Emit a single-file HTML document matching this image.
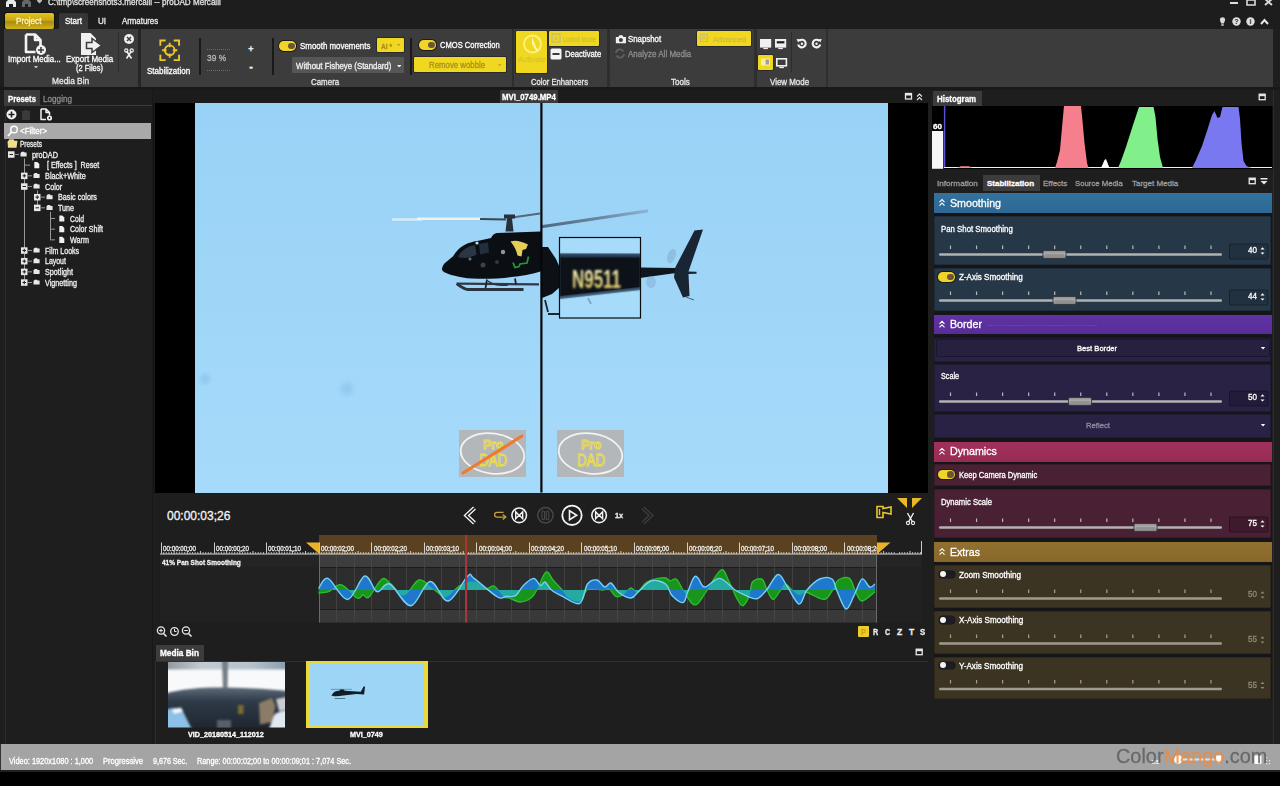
<!DOCTYPE html>
<html lang="en">
<head>
<meta charset="utf-8">
<title>proDAD Mercalli</title>
<style>
html,body{margin:0;padding:0;background:#1e1e1e;}
body{width:1280px;height:786px;position:relative;overflow:hidden;font-family:"Liberation Sans",sans-serif;}
.b{position:absolute;display:block;box-sizing:border-box;}
.t{position:absolute;white-space:pre;transform-origin:0 50%;-webkit-text-stroke:0.3px currentColor;}
svg text{font-family:"Liberation Sans",sans-serif;}
</style>
</head>
<body>
<div class="b" style="left:0px;top:0px;width:1280px;height:12px;background:#1d1d1d;"></div>
<svg class="b" style="left:5px;top:-1.5px;" width="40" height="9" viewBox="0 0 40 9"><path d="M1 8V3l3-3h4l3 3v5h-3V5H4v3z" fill="#e8e8e8"/><path d="M17 8V3l3-3h3l3 3v5h-3V5h-3v3z" fill="#666"/><path d="M32 0h5v2l-2.5 2.5L32 2z" fill="#bbb"/></svg>
<span class="t" style="left:48px;top:-4.25px;font-size:9.5px;line-height:11.5px;color:#e4e4e4;transform:scaleX(0.85);">C:\tmp\screenshots3.mercalli -- proDAD Mercalli</span>
<svg class="b" style="left:1228px;top:0px;" width="48" height="9" viewBox="0 0 48 9"><rect x="2" y="2" width="8" height="2" fill="#ddd"/><path d="M19 0h8v5h-8z" fill="none" stroke="#ddd" stroke-width="1.6"/><path d="M37 -1l7 6m0-6l-7 6" stroke="#ddd" stroke-width="1.8"/></svg>
<div class="b" style="left:0px;top:12px;width:1280px;height:17px;background:#1d1d1d;"></div>
<div class="b" style="left:4.5px;top:13.4px;width:49.5px;height:15.6px;background:linear-gradient(#e6c51c,#c9a814 45%,#a98c10 55%,#d4b41a);border-radius:2px;box-shadow:0 0 0 1px #0f0f0f"></div>
<span class="t" style="left:15.55px;top:16.1px;font-size:9px;line-height:11px;color:#fff3c0;transform:scaleX(0.91);">Project</span>
<div class="b" style="left:59px;top:13.3px;width:29px;height:16.4px;background:linear-gradient(#343434,#3a3a3a);border-radius:2px 2px 0 0"></div>
<span class="t" style="left:65px;top:16.3px;font-size:9px;line-height:11px;color:#fff;transform:scaleX(0.89);">Start</span>
<span class="t" style="left:98px;top:16.3px;font-size:9px;line-height:11px;color:#f0f0f0;transform:scaleX(0.89);">UI</span>
<span class="t" style="left:122px;top:16.3px;font-size:9px;line-height:11px;color:#f0f0f0;transform:scaleX(0.87);">Armatures</span>
<svg class="b" style="left:1217px;top:15.5px;" width="56" height="12" viewBox="0 0 56 12"><path d="M5.5 1.2a2.6 2.6 0 0 1 2.6 2.6c0 1.6-1 2.2-1.2 3.6H4.1C3.900 6 2.9 5.400 2.9 3.800A2.600 2.600 0 0 1 5.500 1.200zM4.300 8.300h2.400v1.500H4.300z" fill="#d8d8d8"/><circle cx="19.500" cy="5.500" r="4.200" fill="#e0e0e0"/><text x="19.500" y="8.300" font-size="7" font-weight="bold" text-anchor="middle" fill="#1d1d1d">?</text><circle cx="33.500" cy="5.500" r="4.200" fill="#e0e0e0"/><text x="33.500" y="8.300" font-size="7" font-weight="bold" text-anchor="middle" fill="#1d1d1d">i</text><path d="M44 8l3.500-4 3.500 4" fill="none" stroke="#e8e8e8" stroke-width="2"/></svg>
<div class="b" style="left:3.7px;top:29px;width:1269.6px;height:58.2px;background:#3c3c3c;"></div>
<div class="b" style="left:0px;top:87.2px;width:1280px;height:3px;background:#191919;"></div>
<div class="b" style="left:137.5px;top:29px;width:3px;height:58.2px;background:#262626;"></div>
<div class="b" style="left:511.5px;top:29px;width:2.5px;height:58.2px;background:#2e2e2e;"></div>
<div class="b" style="left:607px;top:29px;width:2.5px;height:58.2px;background:#2e2e2e;"></div>
<div class="b" style="left:754px;top:29px;width:2.5px;height:58.2px;background:#2e2e2e;"></div>
<div class="b" style="left:826px;top:29px;width:2px;height:58px;background:#2f2f2f;"></div>
<svg class="b" style="left:23px;top:32px;" width="26" height="24" viewBox="0 0 26 24"><path d="M3 2.500h9l5.500 5.500v7M17.500 8h-5.500V2.500M3 2.500v17.500h9.500" fill="none" stroke="#f4f4f4" stroke-width="2.600" stroke-linejoin="round"/><circle cx="18" cy="18" r="5" fill="#f4f4f4"/><path d="M15 18h6M18 15v6" stroke="#3c3c3c" stroke-width="1.600"/></svg>
<span class="t" style="left:8px;top:54.3px;font-size:9px;line-height:11px;color:#fff;transform:scaleX(0.88);">Import Media...</span>
<svg class="b" style="left:34px;top:65.95px" width="4" height="2.5" viewBox="0 0 4 2.5"><path d="M0 0h4l-2 2.5z" fill="#ccc"/></svg>
<svg class="b" style="left:79px;top:32px;" width="26" height="24" viewBox="0 0 26 24"><path d="M2 1h9.500l5.500 5.500v16.500h-15z" fill="#f0f0f0"/><path d="M13 6.500l9.500 7-9.500 7v-4h-5.500v-6h5.500z" fill="#f0f0f0" stroke="#3c3c3c" stroke-width="1.500" stroke-linejoin="miter"/></svg>
<span class="t" style="left:66px;top:54.3px;font-size:9px;line-height:11px;color:#fff;transform:scaleX(0.89);">Export Media</span>
<span class="t" style="left:76px;top:63.1px;font-size:9px;line-height:11px;color:#fff;transform:scaleX(0.83);">(2 Files)</span>
<div class="b" style="left:117.5px;top:32px;width:1.5px;height:40px;background:#2c2c2c;"></div>
<svg class="b" style="left:123px;top:33px;" width="12" height="26" viewBox="0 0 12 26"><circle cx="6" cy="6" r="5" fill="#f0f0f0"/><path d="M4 4l4 4m0-4l-4 4" stroke="#3c3c3c" stroke-width="1.500"/><g transform="translate(0 1.500)"><path d="M3.500 16.500l5 7.500M8.500 16.500l-5 7.500" stroke="#f0f0f0" stroke-width="1.600"/><circle cx="3.300" cy="16" r="1.600" fill="none" stroke="#f0f0f0" stroke-width="1.200"/><circle cx="8.700" cy="16" r="1.600" fill="none" stroke="#f0f0f0" stroke-width="1.200"/></g></svg>
<span class="t" style="left:51.5px;top:76.2px;font-size:9px;line-height:11px;color:#e8e8e8;transform:scaleX(0.93);">Media Bin</span>
<svg class="b" style="left:159.3px;top:38.6px;" width="21.4" height="22.6" viewBox="0 0 24 25"><g fill="none" stroke="#ecc62c" stroke-width="2.100"><path d="M1.500 7.500v-6h6M16.500 1.500h6v6M22.500 17.500v6h-6M7.500 23.500h-6v-6"/><circle cx="12" cy="12.500" r="5.500"/><path d="M12 4v5M12 16v5M3.500 12.500h5M15.500 12.500h5"/></g></svg>
<span class="t" style="left:147px;top:66.3px;font-size:9px;line-height:11px;color:#fff;transform:scaleX(0.89);">Stabilization</span>
<div class="b" style="left:198.5px;top:38px;width:2px;height:37px;background:#1a1a1a;"></div>
<span class="t" style="left:207px;top:53.3px;font-size:9px;line-height:11px;color:#b8b8b8;transform:scaleX(0.93);">39 %</span>
<div class="b" style="left:207px;top:49px;width:23px;height:1px;background:none;border-top:1px dotted #6a6a6a;height:0"></div>
<div class="b" style="left:207px;top:70px;width:23px;height:1px;background:none;border-top:1px dotted #6a6a6a;height:0"></div>
<span class="t" style="left:248.37px;top:43.8px;font-size:9px;line-height:11px;color:#eee;font-weight:bold;">+</span>
<span class="t" style="left:249.17px;top:60.1px;font-size:11px;line-height:13px;color:#eee;font-weight:bold;">-</span>
<div class="b" style="left:271.5px;top:38px;width:2px;height:37px;background:#1a1a1a;"></div>
<div class="b" style="left:279px;top:41px;width:17px;height:9.5px;background:#f0d428;border-radius:4.75px;box-shadow:0 0 0 1px #1c1c1c"><div class="b" style="right:1.500px;top:1.500px;width:6.5px;height:6.5px;border-radius:50%;background:#6b5636"></div></div>
<span class="t" style="left:300px;top:41.3px;font-size:9px;line-height:11px;color:#fff;transform:scaleX(0.88);">Smooth movements</span>
<div class="b" style="left:377px;top:38px;width:27px;height:14px;background:#f0d820;border-radius:1px;box-shadow:0 0 0 1px #2a2a2a"></div>
<span class="t" style="left:381px;top:41.8px;font-size:7px;line-height:9px;color:#a8921c;font-weight:bold;transform:scaleX(0.94);">AI *</span>
<svg class="b" style="left:396.75px;top:44.4px" width="3.5" height="2.2" viewBox="0 0 3.5 2.2"><path d="M0 0h3.5l-1.75 2.2z" fill="#b8a020"/></svg>
<div class="b" style="left:292px;top:57px;width:112px;height:16px;background:#565656;border-radius:1px"></div>
<span class="t" style="left:296px;top:60.8px;font-size:9px;line-height:11px;color:#f4f4f4;transform:scaleX(0.87);">Without Fisheye (Standard)</span>
<svg class="b" style="left:396.8px;top:64.6px" width="4.4" height="2.8" viewBox="0 0 4.4 2.8"><path d="M0 0h4.4l-2.2 2.8z" fill="#f0f0f0"/></svg>
<span class="t" style="left:310.5px;top:76.8px;font-size:9px;line-height:11px;color:#e8e8e8;transform:scaleX(0.88);">Camera</span>
<div class="b" style="left:409.5px;top:38px;width:2px;height:37px;background:#1a1a1a;"></div>
<div class="b" style="left:419px;top:40px;width:17px;height:9.5px;background:#f0d428;border-radius:4.75px;box-shadow:0 0 0 1px #1c1c1c"><div class="b" style="right:1.500px;top:1.500px;width:6.5px;height:6.5px;border-radius:50%;background:#6b5636"></div></div>
<span class="t" style="left:440px;top:40.3px;font-size:9px;line-height:11px;color:#fff;transform:scaleX(0.84);">CMOS Correction</span>
<div class="b" style="left:414px;top:57px;width:92px;height:15px;background:#f0d820;border-radius:1px;box-shadow:0 0 0 1px #2a2a2a"></div>
<span class="t" style="left:429px;top:60.3px;font-size:9px;line-height:11px;color:#a89018;transform:scaleX(0.87);">Remove wobble</span>
<svg class="b" style="left:498.25px;top:64.4px" width="3.5" height="2.2" viewBox="0 0 3.5 2.2"><path d="M0 0h3.5l-1.75 2.2z" fill="#c0a820"/></svg>
<div class="b" style="left:516px;top:31px;width:31px;height:42px;background:#f0d820;border-radius:1px;box-shadow:0 0 0 1px #2a2a2a"></div>
<svg class="b" style="left:521.8px;top:32.6px;" width="24" height="24" viewBox="0 0 24 24"><circle cx="10.500" cy="11" r="8.500" fill="none" stroke="#fff27a" stroke-width="1.800"/><path d="M10 4l4 10-4-2.500z" fill="#fff9b0"/><path d="M12 13l3.500 5" stroke="#fff9b0" stroke-width="2"/></svg>
<span class="t" style="left:518px;top:54.8px;font-size:8px;line-height:10px;color:#dcc428;transform:scaleX(0.98);">Activate</span>
<div class="b" style="left:549px;top:31px;width:50px;height:14.8px;background:#f0d820;border-radius:1px;box-shadow:0 0 0 1px #2a2a2a"></div>
<svg class="b" style="left:551px;top:33px;" width="10" height="10" viewBox="0 0 10 10"><rect x="1" y="1" width="8" height="8" fill="none" stroke="#c8c070" stroke-width="1.500"/><path d="M5 2.500v4M3 5l2 2 2-2" stroke="#c8c070" fill="none"/></svg>
<span class="t" style="left:563px;top:34.5px;font-size:7px;line-height:9px;color:#d6c030;transform:scaleX(0.83);">Unfold Mode</span>
<svg class="b" style="left:550px;top:47.5px;" width="12" height="12" viewBox="0 0 12 12"><rect x="0.500" y="0.500" width="11" height="11" rx="1.500" fill="#f4f4f4"/><rect x="2.500" y="5" width="7" height="2" fill="#3c3c3c"/></svg>
<span class="t" style="left:565px;top:48.8px;font-size:9px;line-height:11px;color:#fff;transform:scaleX(0.85);">Deactivate</span>
<span class="t" style="left:531px;top:76.8px;font-size:9px;line-height:11px;color:#e8e8e8;transform:scaleX(0.85);">Color Enhancers</span>
<svg class="b" style="left:614.5px;top:34px;" width="11.8" height="10.2" viewBox="0 0 14 12"><path d="M1 3.500h3l1.200-2h3.600l1.200 2h3v7.500h-12z" fill="#f0f0f0"/><circle cx="7" cy="7" r="2.400" fill="#3c3c3c"/></svg>
<span class="t" style="left:628px;top:33.8px;font-size:9px;line-height:11px;color:#fff;transform:scaleX(0.87);">Snapshot</span>
<svg class="b" style="left:614px;top:48px;" width="12" height="11" viewBox="0 0 12 11"><path d="M2 5a4 4 0 0 1 7.500-1.500M10 6a4 4 0 0 1-7.500 1.500" fill="none" stroke="#606060" stroke-width="1.800"/></svg>
<span class="t" style="left:628px;top:49.3px;font-size:9px;line-height:11px;color:#8e8e8e;transform:scaleX(0.89);">Analyze All Media</span>
<div class="b" style="left:697px;top:31px;width:54px;height:14.8px;background:#f0d820;border-radius:1px;box-shadow:0 0 0 1px #2a2a2a"></div>
<svg class="b" style="left:699px;top:33px;" width="10" height="10" viewBox="0 0 10 10"><path d="M1.500 1.500h7v7h-7zM3 7l2-3.500 2 3.500" fill="none" stroke="#c8c070" stroke-width="1.200"/></svg>
<span class="t" style="left:713px;top:34.8px;font-size:8px;line-height:10px;color:#d2bc38;transform:scaleX(0.93);">Advanced</span>
<span class="t" style="left:671px;top:76.8px;font-size:9px;line-height:11px;color:#e8e8e8;transform:scaleX(0.9);">Tools</span>
<svg class="b" style="left:760.2px;top:38.6px;" width="12" height="11" viewBox="0 0 12 11"><rect x="0.800" y="0.800" width="9.600" height="7" fill="#f0f0f0" stroke="#f0f0f0" stroke-width="1.600"/><rect x="3.300" y="8.800" width="4.600" height="1.300" fill="#f0f0f0"/></svg>
<svg class="b" style="left:775.4px;top:38.6px;" width="12" height="11" viewBox="0 0 12 11"><rect x="0.800" y="0.800" width="9.600" height="7" fill="#f0f0f0" stroke="#f0f0f0" stroke-width="1.600"/><rect x="3.300" y="8.800" width="4.600" height="1.300" fill="#f0f0f0"/><rect x="1.800" y="2.200" width="7.600" height="2.200" fill="#1c1c1c"/></svg>
<div class="b" style="left:757.8px;top:54.8px;width:15.2px;height:15.2px;background:#f0d820;border-radius:1px;box-shadow:0 0 0 1px #2a2a2a"></div>
<svg class="b" style="left:760px;top:57px;" width="11" height="11" viewBox="0 0 11 11"><rect x="1" y="1.500" width="9" height="7" fill="#f8f0a0" /><rect x="5.600" y="2.500" width="3.400" height="5" fill="#a0a0a0"/></svg>
<svg class="b" style="left:775.6px;top:58.4px;" width="12" height="11" viewBox="0 0 12 11"><rect x="0.800" y="0.800" width="9.600" height="7" fill="#3c3c3c" stroke="#f0f0f0" stroke-width="1.600"/><rect x="3.300" y="8.800" width="4.600" height="1.300" fill="#f0f0f0"/></svg>
<div class="b" style="left:790.5px;top:32px;width:1.5px;height:40px;background:#2c2c2c;"></div>
<svg class="b" style="left:790px;top:34px" width="40" height="20" viewBox="790 34 40 20"><g transform="translate(801.9 43.600)"><path d="M-2.700 -2.700A3.800 3.800 0 1 1 -3.700 0.900" fill="none" stroke="#f2f2f2" stroke-width="2.100"/><path d="M-5.300 -4.600l3.800 0.300-2.300 3.100z" fill="#f2f2f2"/><circle cx="0" cy="0.100" r="1.200" fill="#f2f2f2"/></g><g transform="translate(816.5 43.600) scale(-1 1)"><path d="M-2.700 -2.700A3.800 3.800 0 1 1 -3.700 0.900" fill="none" stroke="#f2f2f2" stroke-width="2.100"/><path d="M-5.300 -4.600l3.800 0.300-2.300 3.100z" fill="#f2f2f2"/><circle cx="0" cy="0.100" r="1.200" fill="#f2f2f2"/></g></svg>
<span class="t" style="left:770px;top:76.8px;font-size:9px;line-height:11px;color:#e8e8e8;transform:scaleX(0.88);">View Mode</span>
<div class="b" style="left:0px;top:90px;width:153px;height:654px;background:#1e1e1e;"></div>
<div class="b" style="left:4px;top:105px;width:148px;height:1px;background:#3c3c3c;"></div>
<div class="b" style="left:4.5px;top:106px;width:1px;height:638px;background:#2c2c2c;"></div>
<div class="b" style="left:151.5px;top:90px;width:3.5px;height:654px;background:#181818;"></div>
<div class="b" style="left:3.8px;top:90px;width:36px;height:16px;background:#3c3c3c;"></div>
<span class="t" style="left:8px;top:93.75px;font-size:8.5px;line-height:10.5px;color:#fff;font-weight:bold;transform:scaleX(0.91);">Presets</span>
<span class="t" style="left:43px;top:93.75px;font-size:8.5px;line-height:10.5px;color:#8c8c8c;transform:scaleX(0.96);">Logging</span>
<svg class="b" style="left:6px;top:108px;" width="48" height="13" viewBox="0 0 48 13"><circle cx="5.500" cy="6.500" r="5" fill="#f2f2f2"/><path d="M2.500 6.500h6M5.500 3.500v6" stroke="#1e1e1e" stroke-width="1.600"/><path d="M16.500 4.500h7v7h-7zM15.500 3.500h9M18.500 2.500h3" fill="#3a3a3a" stroke="#3a3a3a"/><path d="M35 1h5l3.500 3.500v3M43.500 4.500h-3.500v-3.500M35 1v10.500h5" fill="none" stroke="#f2f2f2" stroke-width="1.500" stroke-linejoin="round"/><circle cx="43.500" cy="10" r="2.600" fill="#f2f2f2"/><circle cx="43.500" cy="10" r="0.900" fill="#1e1e1e"/></svg>
<div class="b" style="left:4px;top:123px;width:147px;height:15.5px;background:#a9a9a9;"></div>
<svg class="b" style="left:7px;top:125px;" width="12" height="12" viewBox="0 0 12 12"><circle cx="7" cy="4.500" r="3.300" fill="none" stroke="#fff" stroke-width="1.500"/><path d="M4.600 7l-3.600 4" stroke="#fff" stroke-width="1.800"/></svg>
<span class="t" style="left:20px;top:125.75px;font-size:8.5px;line-height:10.5px;color:#fff;transform:scaleX(0.94);">&lt;Filter&gt;</span>
<span class="t" style="left:20px;top:139.05px;font-size:8.5px;line-height:10.5px;color:#f0f0f0;transform:scaleX(0.76);">Presets</span>
<span class="t" style="left:32px;top:149.72px;font-size:8.5px;line-height:10.5px;color:#f0f0f0;transform:scaleX(0.86);">proDAD</span>
<span class="t" style="left:47px;top:160.39px;font-size:8.5px;line-height:10.5px;color:#f0f0f0;transform:scaleX(0.84);">[ Effects ]  Reset</span>
<span class="t" style="left:45px;top:171.06px;font-size:8.5px;line-height:10.5px;color:#f0f0f0;transform:scaleX(0.86);">Black+White</span>
<span class="t" style="left:45px;top:181.73px;font-size:8.5px;line-height:10.5px;color:#f0f0f0;transform:scaleX(0.84);">Color</span>
<span class="t" style="left:58px;top:192.4px;font-size:8.5px;line-height:10.5px;color:#f0f0f0;transform:scaleX(0.85);">Basic colors</span>
<span class="t" style="left:58px;top:203.07px;font-size:8.5px;line-height:10.5px;color:#f0f0f0;transform:scaleX(0.84);">Tune</span>
<span class="t" style="left:70px;top:213.74px;font-size:8.5px;line-height:10.5px;color:#f0f0f0;transform:scaleX(0.8);">Cold</span>
<span class="t" style="left:70px;top:224.41px;font-size:8.5px;line-height:10.5px;color:#f0f0f0;transform:scaleX(0.83);">Color Shift</span>
<span class="t" style="left:70px;top:235.08px;font-size:8.5px;line-height:10.5px;color:#f0f0f0;transform:scaleX(0.85);">Warm</span>
<span class="t" style="left:45px;top:245.75px;font-size:8.5px;line-height:10.5px;color:#f0f0f0;transform:scaleX(0.83);">Film Looks</span>
<span class="t" style="left:45px;top:256.42px;font-size:8.5px;line-height:10.5px;color:#f0f0f0;transform:scaleX(0.82);">Layout</span>
<span class="t" style="left:45px;top:267.09px;font-size:8.5px;line-height:10.5px;color:#f0f0f0;transform:scaleX(0.85);">Spotlight</span>
<span class="t" style="left:45px;top:277.76px;font-size:8.5px;line-height:10.5px;color:#f0f0f0;transform:scaleX(0.85);">Vignetting</span>
<svg class="b" style="left:0px;top:138px;" width="152" height="160" viewBox="0 0 152 160"><path d="M24.500 20.47V141.51" stroke="#999" stroke-width="1"/><path d="M50.500 73.82V101.83" stroke="#999" stroke-width="1"/><path d="M37.500 52.48V66.82" stroke="#999" stroke-width="1"/><path d="M7.500 3.8 l2-2.500h4l1 1.500h3l-1 7h-8.500z" fill="#f1dd8a"/><rect x="8" y="13.27" width="6.500" height="6.500" fill="#e8e8e8"/><path d="M9.5 16.47h3.500" stroke="#1e1e1e" stroke-width="1"/><path d="M15 16.47h4" stroke="#999" stroke-width="1"/><path d="M20.5 14.97l1.300-1.300h2.200l0.700 0.900h1.900v4h-6.100z" fill="#e8e8e8"/><path d="M25 27.14h5" stroke="#999" stroke-width="1"/><path d="M34.3 24.04h3l2 2v4.200h-5z" fill="#f0f0f0"/><rect x="21" y="34.61" width="6.500" height="6.500" fill="#e8e8e8"/><path d="M22.5 37.81h3.500" stroke="#1e1e1e" stroke-width="1"/><path d="M24.25 36.06v3.500" stroke="#1e1e1e" stroke-width="1"/><path d="M28 37.81h4" stroke="#999" stroke-width="1"/><path d="M33.5 36.31l1.300-1.300h2.200l0.700 0.900h1.900v4h-6.100z" fill="#e8e8e8"/><rect x="21" y="45.28" width="6.500" height="6.500" fill="#e8e8e8"/><path d="M22.5 48.48h3.500" stroke="#1e1e1e" stroke-width="1"/><path d="M28 48.48h4" stroke="#999" stroke-width="1"/><path d="M33.5 46.98l1.300-1.300h2.200l0.700 0.900h1.900v4h-6.100z" fill="#e8e8e8"/><rect x="34" y="55.95" width="6.500" height="6.500" fill="#e8e8e8"/><path d="M35.5 59.15h3.500" stroke="#1e1e1e" stroke-width="1"/><path d="M37.25 57.4v3.500" stroke="#1e1e1e" stroke-width="1"/><path d="M41 59.15h4" stroke="#999" stroke-width="1"/><path d="M46.5 57.65l1.300-1.300h2.200l0.700 0.900h1.900v4h-6.100z" fill="#e8e8e8"/><rect x="34" y="66.62" width="6.500" height="6.500" fill="#e8e8e8"/><path d="M35.5 69.82h3.500" stroke="#1e1e1e" stroke-width="1"/><path d="M41 69.82h4" stroke="#999" stroke-width="1"/><path d="M46.5 68.32l1.300-1.300h2.200l0.700 0.900h1.900v4h-6.100z" fill="#e8e8e8"/><path d="M50 80.49h5" stroke="#999" stroke-width="1"/><path d="M59.3 77.39h3l2 2v4.200h-5z" fill="#f0f0f0"/><path d="M50 91.16h5" stroke="#999" stroke-width="1"/><path d="M59.3 88.06h3l2 2v4.200h-5z" fill="#f0f0f0"/><path d="M50 101.83h5" stroke="#999" stroke-width="1"/><path d="M59.3 98.73h3l2 2v4.200h-5z" fill="#f0f0f0"/><rect x="21" y="109.3" width="6.500" height="6.500" fill="#e8e8e8"/><path d="M22.5 112.5h3.500" stroke="#1e1e1e" stroke-width="1"/><path d="M24.25 110.75v3.500" stroke="#1e1e1e" stroke-width="1"/><path d="M28 112.5h4" stroke="#999" stroke-width="1"/><path d="M33.5 111l1.300-1.300h2.200l0.700 0.900h1.900v4h-6.100z" fill="#e8e8e8"/><rect x="21" y="119.97" width="6.500" height="6.500" fill="#e8e8e8"/><path d="M22.5 123.17h3.500" stroke="#1e1e1e" stroke-width="1"/><path d="M24.25 121.42v3.500" stroke="#1e1e1e" stroke-width="1"/><path d="M28 123.17h4" stroke="#999" stroke-width="1"/><path d="M33.5 121.67l1.300-1.300h2.200l0.700 0.900h1.900v4h-6.100z" fill="#e8e8e8"/><rect x="21" y="130.64" width="6.500" height="6.500" fill="#e8e8e8"/><path d="M22.5 133.84h3.500" stroke="#1e1e1e" stroke-width="1"/><path d="M24.25 132.09v3.500" stroke="#1e1e1e" stroke-width="1"/><path d="M28 133.84h4" stroke="#999" stroke-width="1"/><path d="M33.5 132.34l1.300-1.300h2.200l0.700 0.900h1.900v4h-6.100z" fill="#e8e8e8"/><rect x="21" y="141.31" width="6.500" height="6.500" fill="#e8e8e8"/><path d="M22.5 144.51h3.500" stroke="#1e1e1e" stroke-width="1"/><path d="M24.25 142.76v3.500" stroke="#1e1e1e" stroke-width="1"/><path d="M28 144.51h4" stroke="#999" stroke-width="1"/><path d="M33.5 143.01l1.300-1.300h2.200l0.700 0.900h1.900v4h-6.100z" fill="#e8e8e8"/></svg>
<div class="b" style="left:153px;top:90px;width:778px;height:13px;background:#1c1c1c;"></div>
<div class="b" style="left:500px;top:90.3px;width:57.5px;height:12.7px;background:#3a3a3a;"></div>
<span class="t" style="left:502px;top:91.75px;font-size:8.5px;line-height:10.5px;color:#fff;font-weight:bold;transform:scaleX(0.92);">MVI_0749.MP4</span>
<svg class="b" style="left:904px;top:92px;" width="20" height="9" viewBox="0 0 20 9"><rect x="1.500" y="1.500" width="6" height="5.500" fill="#1c1c1c" stroke="#e8e8e8" stroke-width="1.300"/><rect x="1.500" y="1.500" width="6" height="2" fill="#e8e8e8"/><path d="M13 4.500l2.500-2.500 2.500 2.500M13 8l2.500-2.500 2.500 2.500" fill="none" stroke="#e8e8e8" stroke-width="1.100"/></svg>
<div class="b" style="left:155px;top:103px;width:773px;height:389.5px;background:#000;"></div>
<div class="b" style="left:195px;top:103px;width:693px;height:389.5px;background:#9dd5f7;"></div>
<svg class="b" style="left:0;top:0" width="1280" height="493" viewBox="0 0 1280 493"><defs><linearGradient id="skyg" x1="0" y1="0" x2="0" y2="1"><stop offset="0" stop-color="#98d2f6"/><stop offset="1" stop-color="#a6dafa"/></linearGradient><filter color-interpolation-filters="sRGB" id="hb" x="-5%" y="-20%" width="110%" height="140%"><feGaussianBlur color-interpolation-filters="sRGB" stdDeviation="0.550"/></filter><filter color-interpolation-filters="sRGB" id="hb2" x="-10%" y="-20%" width="120%" height="140%"><feGaussianBlur color-interpolation-filters="sRGB" stdDeviation="0.800"/></filter><linearGradient id="bladeg" gradientUnits="userSpaceOnUse" x1="543" y1="0" x2="647" y2="0"><stop offset="0" stop-color="#4e6880"/><stop offset="0.600" stop-color="#6d8ba6"/><stop offset="1" stop-color="#8db2d2"/></linearGradient><linearGradient id="ntx" x1="0" y1="0" x2="0" y2="1"><stop offset="0" stop-color="#f6f0c8"/><stop offset="0.550" stop-color="#ecdc88"/><stop offset="1" stop-color="#d2b850"/></linearGradient><radialGradient id="spot"><stop offset="0" stop-color="#7fbce6" stop-opacity="0.550"/><stop offset="0.500" stop-color="#86c2ea" stop-opacity="0.350"/><stop offset="1" stop-color="#9dd5f7" stop-opacity="0"/></radialGradient><clipPath id="mag"><rect x="560" y="238" width="80" height="80"/></clipPath></defs><rect x="195" y="103" width="693" height="389.500" fill="url(#skyg)"/><circle cx="347" cy="389" r="11" fill="url(#spot)"/><circle cx="205" cy="379" r="9" fill="url(#spot)"/><g filter="url(#hb)"><path d="M392 219.500h30" stroke="#d6ecfb" stroke-width="2.500"/><path d="M417 218.800h64" stroke="#f4f0ee" stroke-width="2.600"/><path d="M480 219l26 0.500" stroke="#3a4652" stroke-width="2.200"/><path d="M512 217.500l28-4" stroke="#55687a" stroke-width="2.200"/><path d="M504 214.500h11v4h-3l1.500 13h-8l1.500-13h-3z" fill="#27313c"/><path d="M441.900 268.900C442.500 266 443.500 264.500 444.700 263.300L453.100 256.300C456 251 460 247.500 464.400 245C469 242.600 474 241.400 478.500 240.800L491.100 238C492 235.500 494 233.600 496.700 233.100L541 231.600V271.200C530 274.500 522 276 513.600 276.700C500 278.500 490 279 478.500 278.800C470 278.600 464 278 458.800 276.700C453 275.500 449 274.500 446.100 273.100C443.500 272 442 270.500 441.900 268.900Z" fill="#0b0e13"/><path d="M458 257c3-6.500 9-10.500 17-12l1.500 9.500c-6 3.500-12 4.500-18.500 2.500z" fill="#2a3644"/><path d="M479 244l9-1.500 1 10-9 2z" fill="#222e3c"/><path d="M510.500 241.500c5-1.500 9-1 17.500 3l-2 4.500-3.500 1-1 6.500-4-1c-1-5-3-9-7-14z" fill="#e6cd58"/><path d="M513 262.500l2 5 4-1 1-2.500 7-1 1.500-6.500" stroke="#259a3c" stroke-width="1.700" fill="none"/><circle cx="477" cy="243" r="1.600" fill="#cfd6dc"/><circle cx="503" cy="252" r="2.200" fill="#8b97a3"/><circle cx="483" cy="265" r="2.500" fill="#39434e"/><circle cx="470" cy="259" r="1.500" fill="#66727e"/><circle cx="497" cy="262" r="2" fill="#2e3844"/><path d="M456.700 283.700L539 284.400" stroke="#303a46" stroke-width="2.300"/><path d="M456.700 283.700C460 286 463 288.500 467.200 289.500L523.500 289.500" stroke="#2a333e" stroke-width="2.800" fill="none"/><path d="M487 279.500l-1.500 8.500M515 278.500l1 6" stroke="#1c242c" stroke-width="1.800"/><path d="M488 281c5 4 12 5 20 4" stroke="#2a343e" stroke-width="1.400" fill="none"/><path d="M543 226.500l104-15.500" stroke="url(#bladeg)" stroke-width="2.800" stroke-linecap="round"/><path d="M542 247h6l8 12 4 9v19l-8 7-10 4z" fill="#0d1116"/><path d="M545 300l3 12M548 314h11" stroke="#1d2730" stroke-width="1.800" fill="none"/><path d="M640 267.500l36 0.500v5l-36 5z" fill="#10161d"/><ellipse cx="671.500" cy="256" rx="4" ry="7.500" fill="#7fa9cc" opacity="0.500" transform="rotate(20 671.5 256)"/><ellipse cx="651" cy="282" rx="5" ry="6" fill="#7fa9cc" opacity="0.450"/><path d="M675 268l19.500-37.500 8.500-1-14.500 42 8 0.300v2l-8 0.300 1 22-6.500 1.500-9-20z" fill="#1a2533"/><path d="M686 297l8 3" stroke="#4a5f74" stroke-width="1"/></g><rect x="559.500" y="237.500" width="81" height="80.500" fill="#a6dbfa"/><g clip-path="url(#mag)"><path d="M559 254.500l82 0.500v34l-82 9z" fill="#0d1218" filter="url(#hb2)"/><path d="M559 253.500h82v4h-82z" fill="#27405a" opacity="0.800"/><path d="M559 296l82-9v3l-82 9z" fill="#3a5876" opacity="0.600"/><path d="M588 298l3 6" stroke="#6c95b8" stroke-width="2" opacity="0.700"/></g><text x="572" y="288" font-size="25" font-weight="bold" fill="url(#ntx)" filter="url(#hb2)" font-family="Liberation Sans,sans-serif" textLength="49" lengthAdjust="spacingAndGlyphs">N9511</text><rect x="559.500" y="237.500" width="81" height="80.500" fill="none" stroke="#0a0a0a" stroke-width="1.200"/><rect x="540.300" y="103" width="2.200" height="389.500" fill="#05070a"/><g transform="translate(459 430)"><rect x="0" y="0" width="67" height="47" fill="#b4b4b4" opacity="0.920"/><ellipse cx="33.500" cy="23.500" rx="32" ry="20" fill="none" stroke="#f2f2f2" stroke-width="1.800" transform="rotate(8 33.5 23.5)"/><text x="34" y="19" font-size="12" text-anchor="middle" fill="none" stroke="#f0e23c" stroke-width="0.900" font-family="Liberation Sans,sans-serif" font-weight="bold">Pro</text><text x="34" y="36" font-size="17" text-anchor="middle" fill="none" stroke="#f0e23c" stroke-width="0.900" font-family="Liberation Sans,sans-serif" textLength="28" lengthAdjust="spacingAndGlyphs">DAD</text><path d="M4 43L63 6" stroke="#ee7a30" stroke-width="3.200" stroke-linecap="round"/></g><g transform="translate(557 430)"><rect x="0" y="0" width="67" height="47" fill="#b4b4b4" opacity="0.920"/><ellipse cx="33.500" cy="23.500" rx="32" ry="20" fill="none" stroke="#f2f2f2" stroke-width="1.800" transform="rotate(8 33.5 23.5)"/><text x="34" y="19" font-size="12" text-anchor="middle" fill="none" stroke="#f0e23c" stroke-width="0.900" font-family="Liberation Sans,sans-serif" font-weight="bold">Pro</text><text x="34" y="36" font-size="17" text-anchor="middle" fill="none" stroke="#f0e23c" stroke-width="0.900" font-family="Liberation Sans,sans-serif" textLength="28" lengthAdjust="spacingAndGlyphs">DAD</text></g></svg>
<div class="b" style="left:153px;top:492.5px;width:778px;height:42.5px;background:#1e1e1e;"></div>
<span class="t" style="left:167px;top:508.5px;font-size:12px;line-height:14px;color:#f4f4f4;">00:00:03;26</span>
<svg class="b" style="left:0;top:493px" width="1280" height="42" viewBox="0 493 1280 42"><g fill="none" stroke-linejoin="miter"><path d="M474.500 508l-8 7.500 8 7.500" stroke="#f4f4f4" stroke-width="4.200"/><path d="M474.500 508l-8 7.500 8 7.500" stroke="#1e1e1e" stroke-width="1.600"/><path d="M503.500 512.300h-6.500a2.400 2.400 0 0 0 0 4.800h8.500" stroke="#c9a240" stroke-width="1.300"/><path d="M502.800 514.600l3 2.500-3 2.500" stroke="#c9a240" stroke-width="1.300"/><circle cx="519.2" cy="515.300" r="7.3" stroke="#f2f2f2" stroke-width="1.6"/><path d="M515.7 511.800v7l3.300-3.500zM522.7 511.800v7l-3.300-3.500z" stroke="#f2f2f2" stroke-width="1.400"/><circle cx="545.4" cy="515.300" r="7.7" stroke="#484848" stroke-width="1.5"/><rect x="542" y="511" width="2.600" height="8.600" rx="1" stroke="#484848" stroke-width="1.100"/><rect x="546.200" y="511" width="2.600" height="8.600" rx="1" stroke="#484848" stroke-width="1.100"/><circle cx="572" cy="515.300" r="9.7" stroke="#f2f2f2" stroke-width="1.8"/><path d="M569.500 510.800l7.200 4.500-7.200 4.500z" stroke="#f2f2f2" stroke-width="1.600"/><circle cx="599.1" cy="515.300" r="7.3" stroke="#f2f2f2" stroke-width="1.6"/><path d="M595.6 511.800v7l3.300-3.500zM602.6 511.800v7l-3.300-3.500z" stroke="#f2f2f2" stroke-width="1.400"/><path d="M643 508l8 7.500-8 7.500" stroke="#3e3e3e" stroke-width="4"/><path d="M643 508l8 7.500-8 7.500" stroke="#1e1e1e" stroke-width="1.500"/></g><path d="M877 506.500h6v2l8-1.500v7l-8-1.500v5h-6z" fill="none" stroke="#e8c828" stroke-width="1.600"/><path d="M879.500 509v6" stroke="#e8c828" stroke-width="1.400"/><path d="M897 498h10v10z" fill="#e8b828"/><path d="M922 498h-10v10z" fill="#e8b828"/><path d="M907.500 513l5 9M913.500 513l-5 9" stroke="#f2f2f2" stroke-width="1.400"/><circle cx="908" cy="523" r="1.600" fill="none" stroke="#f2f2f2" stroke-width="1.100"/><circle cx="913" cy="523" r="1.600" fill="none" stroke="#f2f2f2" stroke-width="1.100"/></svg>
<span class="t" style="left:615px;top:510.8px;font-size:8px;line-height:10px;color:#f0f0f0;font-weight:bold;transform:scaleX(0.92);">1x</span>
<div class="b" style="left:153px;top:535px;width:778px;height:109px;background:#1e1e1e;"></div>
<svg class="b" style="left:0;top:535px" width="1280" height="90" viewBox="0 535 1280 90"><rect x="319" y="534.700" width="558" height="19.800" fill="#5a4220"/><rect x="160" y="555" width="762" height="67.500" fill="#212121"/><rect x="160" y="555" width="762" height="12" fill="#242424"/><rect x="319" y="555" width="558" height="67.500" fill="#2d2d2d"/><rect x="319" y="555" width="558" height="12" fill="#3d3d3d"/><rect x="319" y="610" width="558" height="12.500" fill="#393939"/><path d="M319 567.500h558M319 609.500h558" stroke="#1c1c1c" stroke-width="1"/><path d="M319.5 555v67M336.5 555v67M354.5 555v67M371.5 555v67M389.5 555v67M406.5 555v67M424.5 555v67M441.5 555v67M459.5 555v67M476.5 555v67M494.5 555v67M511.5 555v67M529.5 555v67M546.5 555v67M564.5 555v67M581.5 555v67M599.5 555v67M617.5 555v67M634.5 555v67M652.5 555v67M669.5 555v67M687.5 555v67M704.5 555v67M722.5 555v67M739.5 555v67M757.5 555v67M774.5 555v67M792.5 555v67M809.5 555v67M827.5 555v67M844.5 555v67M862.5 555v67" stroke="#4a4a4a" stroke-width="1" opacity="0.700"/><path d="M319.500 555v67.500M876.500 555v67.500" stroke="#6a6a6a" stroke-width="1"/><path d="M160 554h762" stroke="#dcdcdc" stroke-width="1.200"/><path d="M161.5 542.500v11M163.63 552.200v1.500M166.26 552.200v1.500M168.88 552.200v1.500M171.51 552.200v1.500M174.14 551v3M176.77 552.200v1.500M179.4 552.200v1.500M182.02 552.200v1.500M184.65 552.200v1.500M187.28 551v3M189.91 552.200v1.500M192.54 552.200v1.500M195.16 552.200v1.500M197.79 552.200v1.500M200.42 551v3M203.05 552.200v1.500M205.68 552.200v1.500M208.3 552.200v1.500M210.93 552.200v1.500M214.5 542.500v11M216.19 552.200v1.500M218.82 552.200v1.500M221.44 552.200v1.500M224.07 552.200v1.500M226.7 551v3M229.33 552.200v1.500M231.96 552.200v1.500M234.58 552.200v1.500M237.21 552.200v1.500M239.84 551v3M242.47 552.200v1.500M245.1 552.200v1.500M247.72 552.200v1.500M250.35 552.200v1.500M252.98 551v3M255.61 552.200v1.500M258.24 552.200v1.500M260.86 552.200v1.500M263.49 552.200v1.500M266.5 542.500v11M268.75 552.200v1.500M271.38 552.200v1.500M274 552.200v1.500M276.63 552.200v1.500M279.26 551v3M281.89 552.200v1.500M284.52 552.200v1.500M287.14 552.200v1.500M289.77 552.200v1.500M292.4 551v3M295.03 552.200v1.500M297.66 552.200v1.500M300.28 552.200v1.500M302.91 552.200v1.500M305.54 551v3M308.17 552.200v1.500M310.8 552.200v1.500M313.42 552.200v1.500M316.05 552.200v1.500M319.5 542.500v11M321.31 552.200v1.500M323.94 552.200v1.500M326.56 552.200v1.500M329.19 552.200v1.500M331.82 551v3M334.45 552.200v1.500M337.08 552.200v1.500M339.7 552.200v1.500M342.33 552.200v1.500M344.96 551v3M347.59 552.200v1.500M350.22 552.200v1.500M352.84 552.200v1.500M355.47 552.200v1.500M358.1 551v3M360.73 552.200v1.500M363.36 552.200v1.500M365.98 552.200v1.500M368.61 552.200v1.500M371.5 542.500v11M373.87 552.200v1.500M376.5 552.200v1.500M379.12 552.200v1.500M381.75 552.200v1.500M384.38 551v3M387.01 552.200v1.500M389.64 552.200v1.500M392.26 552.200v1.500M394.89 552.200v1.500M397.52 551v3M400.15 552.200v1.500M402.78 552.200v1.500M405.4 552.200v1.500M408.03 552.200v1.500M410.66 551v3M413.29 552.200v1.500M415.92 552.200v1.500M418.54 552.200v1.500M421.17 552.200v1.500M424.5 542.500v11M426.43 552.200v1.500M429.06 552.200v1.500M431.68 552.200v1.500M434.31 552.200v1.500M436.94 551v3M439.57 552.200v1.500M442.2 552.200v1.500M444.82 552.200v1.500M447.45 552.200v1.500M450.08 551v3M452.71 552.200v1.500M455.34 552.200v1.500M457.96 552.200v1.500M460.59 552.200v1.500M463.22 551v3M465.85 552.200v1.500M468.48 552.200v1.500M471.1 552.200v1.500M473.73 552.200v1.500M476.5 542.500v11M478.99 552.200v1.500M481.62 552.200v1.500M484.24 552.200v1.500M486.87 552.200v1.500M489.5 551v3M492.13 552.200v1.500M494.76 552.200v1.500M497.38 552.200v1.500M500.01 552.200v1.500M502.64 551v3M505.27 552.200v1.500M507.9 552.200v1.500M510.52 552.200v1.500M513.15 552.200v1.500M515.78 551v3M518.41 552.200v1.500M521.04 552.200v1.500M523.66 552.200v1.500M526.29 552.200v1.500M529.5 542.500v11M531.55 552.200v1.500M534.18 552.200v1.500M536.8 552.200v1.500M539.43 552.200v1.500M542.06 551v3M544.69 552.200v1.500M547.32 552.200v1.500M549.94 552.200v1.500M552.57 552.200v1.500M555.2 551v3M557.83 552.200v1.500M560.46 552.200v1.500M563.08 552.200v1.500M565.71 552.200v1.500M568.34 551v3M570.97 552.200v1.500M573.6 552.200v1.500M576.22 552.200v1.500M578.85 552.200v1.500M581.5 542.500v11M584.11 552.200v1.500M586.74 552.200v1.500M589.36 552.200v1.500M591.99 552.200v1.500M594.62 551v3M597.25 552.200v1.500M599.88 552.200v1.500M602.5 552.200v1.500M605.13 552.200v1.500M607.76 551v3M610.39 552.200v1.500M613.02 552.200v1.500M615.64 552.200v1.500M618.27 552.200v1.500M620.9 551v3M623.53 552.200v1.500M626.16 552.200v1.500M628.78 552.200v1.500M631.41 552.200v1.500M634.5 542.500v11M636.67 552.200v1.500M639.3 552.200v1.500M641.92 552.200v1.500M644.55 552.200v1.500M647.18 551v3M649.81 552.200v1.500M652.44 552.200v1.500M655.06 552.200v1.500M657.69 552.200v1.500M660.32 551v3M662.95 552.200v1.500M665.58 552.200v1.500M668.2 552.200v1.500M670.83 552.200v1.500M673.46 551v3M676.09 552.200v1.500M678.72 552.200v1.500M681.34 552.200v1.500M683.97 552.200v1.500M687.5 542.500v11M689.23 552.200v1.500M691.86 552.200v1.500M694.48 552.200v1.500M697.11 552.200v1.500M699.74 551v3M702.37 552.200v1.500M705 552.200v1.500M707.62 552.200v1.500M710.25 552.200v1.500M712.88 551v3M715.51 552.200v1.500M718.14 552.200v1.500M720.76 552.200v1.500M723.39 552.200v1.500M726.02 551v3M728.65 552.200v1.500M731.28 552.200v1.500M733.9 552.200v1.500M736.53 552.200v1.500M739.5 542.500v11M741.79 552.200v1.500M744.42 552.200v1.500M747.04 552.200v1.500M749.67 552.200v1.500M752.3 551v3M754.93 552.200v1.500M757.56 552.200v1.500M760.18 552.200v1.500M762.81 552.200v1.500M765.44 551v3M768.07 552.200v1.500M770.7 552.200v1.500M773.32 552.200v1.500M775.95 552.200v1.500M778.58 551v3M781.21 552.200v1.500M783.84 552.200v1.500M786.46 552.200v1.500M789.09 552.200v1.500M792.5 542.500v11M794.35 552.200v1.500M796.98 552.200v1.500M799.6 552.200v1.500M802.23 552.200v1.500M804.86 551v3M807.49 552.200v1.500M810.12 552.200v1.500M812.74 552.200v1.500M815.37 552.200v1.500M818 551v3M820.63 552.200v1.500M823.26 552.200v1.500M825.88 552.200v1.500M828.51 552.200v1.500M831.14 551v3M833.77 552.200v1.500M836.4 552.200v1.500M839.02 552.200v1.500M841.65 552.200v1.500M844.5 542.500v11M846.91 552.200v1.500M849.54 552.200v1.500M852.16 552.200v1.500M854.79 552.200v1.500M857.42 551v3M860.05 552.200v1.500M862.68 552.200v1.500M865.3 552.200v1.500M867.93 552.200v1.500M870.56 551v3M873.19 552.200v1.500M875.82 552.200v1.500M878.44 552.200v1.500M881.07 552.200v1.500M883.7 551v3M886.33 552.200v1.500M888.96 552.200v1.500M891.58 552.200v1.500M894.21 552.200v1.500M899.47 552.200v1.500M902.1 552.200v1.500M904.72 552.200v1.500M907.35 552.200v1.500M909.98 551v3M912.61 552.200v1.500M915.24 552.200v1.500M917.86 552.200v1.500M920.49 552.200v1.500M921.500 541v13" stroke="#e0e0e0" stroke-width="0.900"/><defs><clipPath id="gclip"><path d="M318.6 593C320.32 592.78 324.89 593.11 328.7 591.7C332.51 590.29 336.19 583.63 341 584.7C345.81 585.77 353.26 596.25 357 598C360.74 599.75 360.96 595.17 363 595C365.04 594.83 365.77 599.72 369 597C372.23 594.28 378.26 581.21 382 579C385.74 576.79 387.26 581.18 391 584C394.74 586.82 399.24 596.28 404 595.6C408.76 594.92 414.07 581.19 419 580C423.93 578.81 428.41 585.71 433 588.6C437.59 591.49 441.41 597.53 446 597C450.59 596.47 455.24 588.13 460 585.5C464.76 582.87 469.5 580.97 474 581.5C478.5 582.03 483.1 587.84 486.5 588.6C489.9 589.37 491.02 584.57 494 586C496.98 587.43 501.45 594.96 504 597C506.55 599.04 506.28 597.15 509 598C511.72 598.85 516.26 602 520 602C523.74 602 528.02 600.28 531 598C533.98 595.72 534.95 593.02 537.5 588.6C540.05 584.18 543.37 573.46 546 572C548.63 570.54 550.45 577.18 553 580C555.55 582.82 558.28 585.41 561 588.6C563.72 591.79 565.6 596.64 569 598.75C572.4 600.86 577.86 602.59 581 601C584.14 599.41 583.76 591.27 587.5 589.4C591.24 587.53 599.35 590.14 603 590C606.65 589.86 606.86 587.51 609 588.6C611.14 589.69 613.15 595.35 615.6 596.4C618.05 597.45 620.78 596.26 623.4 594.8C626.02 593.34 628.6 588.19 631 587.8C633.4 587.41 634.78 593.49 637.5 592.5C640.22 591.51 642.5 584.53 647 582C651.5 579.47 660.09 577.8 664 577.6C667.91 577.4 667.88 580.53 670 580.8C672.12 581.07 674.29 577.64 676.5 579.2C678.71 580.76 680.37 585.89 683 590C685.63 594.11 689.45 601.12 692 603.4C694.55 605.68 695.69 605.25 698 603.4C700.31 601.55 701.69 598.18 705.6 592.5C709.51 586.82 717.02 571.87 721 570C724.98 568.13 726.28 576.61 729 581.5C731.72 586.39 734.62 594.62 737 598.75C739.38 602.88 740.89 606.34 743 605.8C745.11 605.26 747.78 599.65 749.4 595.6C751.01 591.55 750.36 584.79 752.5 582C754.64 579.21 759.62 578.08 762 579.2C764.38 580.32 764.63 585.15 766.5 588.6C768.37 592.05 770.6 599.26 773 599.5C775.4 599.74 778.56 592.63 780.6 590C782.64 587.37 783.15 584.1 785 584C786.85 583.9 789.12 587.53 791.5 589.4C793.88 591.27 796.37 594.47 799 595C801.63 595.53 802.75 591.74 807 592.5C811.25 593.26 819.75 599.75 824 599.5C828.25 599.25 829.55 594.32 832 591C834.45 587.68 835.44 582.14 838.4 580C841.36 577.86 846.48 576.41 849.4 578.4C852.32 580.39 853.46 587.86 855.6 591.7C857.74 595.54 858.7 601 862 601C865.3 601 872.79 593.28 875 591.7L875 590L318.600 590Z"/></clipPath></defs><path d="M318.6 593C320.32 592.78 324.89 593.11 328.7 591.7C332.51 590.29 336.19 583.63 341 584.7C345.81 585.77 353.26 596.25 357 598C360.74 599.75 360.96 595.17 363 595C365.04 594.83 365.77 599.72 369 597C372.23 594.28 378.26 581.21 382 579C385.74 576.79 387.26 581.18 391 584C394.74 586.82 399.24 596.28 404 595.6C408.76 594.92 414.07 581.19 419 580C423.93 578.81 428.41 585.71 433 588.6C437.59 591.49 441.41 597.53 446 597C450.59 596.47 455.24 588.13 460 585.5C464.76 582.87 469.5 580.97 474 581.5C478.5 582.03 483.1 587.84 486.5 588.6C489.9 589.37 491.02 584.57 494 586C496.98 587.43 501.45 594.96 504 597C506.55 599.04 506.28 597.15 509 598C511.72 598.85 516.26 602 520 602C523.74 602 528.02 600.28 531 598C533.98 595.72 534.95 593.02 537.5 588.6C540.05 584.18 543.37 573.46 546 572C548.63 570.54 550.45 577.18 553 580C555.55 582.82 558.28 585.41 561 588.6C563.72 591.79 565.6 596.64 569 598.75C572.4 600.86 577.86 602.59 581 601C584.14 599.41 583.76 591.27 587.5 589.4C591.24 587.53 599.35 590.14 603 590C606.65 589.86 606.86 587.51 609 588.6C611.14 589.69 613.15 595.35 615.6 596.4C618.05 597.45 620.78 596.26 623.4 594.8C626.02 593.34 628.6 588.19 631 587.8C633.4 587.41 634.78 593.49 637.5 592.5C640.22 591.51 642.5 584.53 647 582C651.5 579.47 660.09 577.8 664 577.6C667.91 577.4 667.88 580.53 670 580.8C672.12 581.07 674.29 577.64 676.5 579.2C678.71 580.76 680.37 585.89 683 590C685.63 594.11 689.45 601.12 692 603.4C694.55 605.68 695.69 605.25 698 603.4C700.31 601.55 701.69 598.18 705.6 592.5C709.51 586.82 717.02 571.87 721 570C724.98 568.13 726.28 576.61 729 581.5C731.72 586.39 734.62 594.62 737 598.75C739.38 602.88 740.89 606.34 743 605.8C745.11 605.26 747.78 599.65 749.4 595.6C751.01 591.55 750.36 584.79 752.5 582C754.64 579.21 759.62 578.08 762 579.2C764.38 580.32 764.63 585.15 766.5 588.6C768.37 592.05 770.6 599.26 773 599.5C775.4 599.74 778.56 592.63 780.6 590C782.64 587.37 783.15 584.1 785 584C786.85 583.9 789.12 587.53 791.5 589.4C793.88 591.27 796.37 594.47 799 595C801.63 595.53 802.75 591.74 807 592.5C811.25 593.26 819.75 599.75 824 599.5C828.25 599.25 829.55 594.32 832 591C834.45 587.68 835.44 582.14 838.4 580C841.36 577.86 846.48 576.41 849.4 578.4C852.32 580.39 853.46 587.86 855.6 591.7C857.74 595.54 858.7 601 862 601C865.3 601 872.79 593.28 875 591.7L875 590L318.600 590Z" fill="#1a951c"/><path d="M318.6 593C320.32 592.78 324.89 593.11 328.7 591.7C332.51 590.29 336.19 583.63 341 584.7C345.81 585.77 353.26 596.25 357 598C360.74 599.75 360.96 595.17 363 595C365.04 594.83 365.77 599.72 369 597C372.23 594.28 378.26 581.21 382 579C385.74 576.79 387.26 581.18 391 584C394.74 586.82 399.24 596.28 404 595.6C408.76 594.92 414.07 581.19 419 580C423.93 578.81 428.41 585.71 433 588.6C437.59 591.49 441.41 597.53 446 597C450.59 596.47 455.24 588.13 460 585.5C464.76 582.87 469.5 580.97 474 581.5C478.5 582.03 483.1 587.84 486.5 588.6C489.9 589.37 491.02 584.57 494 586C496.98 587.43 501.45 594.96 504 597C506.55 599.04 506.28 597.15 509 598C511.72 598.85 516.26 602 520 602C523.74 602 528.02 600.28 531 598C533.98 595.72 534.95 593.02 537.5 588.6C540.05 584.18 543.37 573.46 546 572C548.63 570.54 550.45 577.18 553 580C555.55 582.82 558.28 585.41 561 588.6C563.72 591.79 565.6 596.64 569 598.75C572.4 600.86 577.86 602.59 581 601C584.14 599.41 583.76 591.27 587.5 589.4C591.24 587.53 599.35 590.14 603 590C606.65 589.86 606.86 587.51 609 588.6C611.14 589.69 613.15 595.35 615.6 596.4C618.05 597.45 620.78 596.26 623.4 594.8C626.02 593.34 628.6 588.19 631 587.8C633.4 587.41 634.78 593.49 637.5 592.5C640.22 591.51 642.5 584.53 647 582C651.5 579.47 660.09 577.8 664 577.6C667.91 577.4 667.88 580.53 670 580.8C672.12 581.07 674.29 577.64 676.5 579.2C678.71 580.76 680.37 585.89 683 590C685.63 594.11 689.45 601.12 692 603.4C694.55 605.68 695.69 605.25 698 603.4C700.31 601.55 701.69 598.18 705.6 592.5C709.51 586.82 717.02 571.87 721 570C724.98 568.13 726.28 576.61 729 581.5C731.72 586.39 734.62 594.62 737 598.75C739.38 602.88 740.89 606.34 743 605.8C745.11 605.26 747.78 599.65 749.4 595.6C751.01 591.55 750.36 584.79 752.5 582C754.64 579.21 759.62 578.08 762 579.2C764.38 580.32 764.63 585.15 766.5 588.6C768.37 592.05 770.6 599.26 773 599.5C775.4 599.74 778.56 592.63 780.6 590C782.64 587.37 783.15 584.1 785 584C786.85 583.9 789.12 587.53 791.5 589.4C793.88 591.27 796.37 594.47 799 595C801.63 595.53 802.75 591.74 807 592.5C811.25 593.26 819.75 599.75 824 599.5C828.25 599.25 829.55 594.32 832 591C834.45 587.68 835.44 582.14 838.4 580C841.36 577.86 846.48 576.41 849.4 578.4C852.32 580.39 853.46 587.86 855.6 591.7C857.74 595.54 858.7 601 862 601C865.3 601 872.79 593.28 875 591.7" fill="none" stroke="#2bbf2e" stroke-width="1.300"/><path d="M318.6 588.6C320.2 586.87 323.09 576.55 328 578.4C332.91 580.25 341.26 599.91 347.5 599.5C353.74 599.09 359.69 577.33 364.7 576C369.71 574.67 372.75 590.34 377 591.7C381.25 593.06 383.95 581.6 389.7 584C395.45 586.4 403.95 606.22 410.8 605.8C417.65 605.38 423.68 582.32 430 581.5C436.32 580.68 441.57 601.93 448 601C454.43 600.07 463.38 579.84 467.8 576C472.22 572.16 468.95 574.83 474 578.4C479.05 581.97 492.06 593.92 497.5 597C502.94 600.08 502.92 596.74 506 596.5C509.08 596.26 512.64 597.47 515.6 595.6C518.56 593.73 520.34 588.42 523.4 585.5C526.46 582.58 530.68 578.4 533.6 578.4C536.52 578.4 538.66 584.89 540.6 585.5C542.54 586.11 543.15 581.24 545 582C546.85 582.76 548.52 587.55 551.5 590C554.48 592.45 557.71 594.12 562.5 596.4C567.29 598.68 575.45 605.51 579.7 603.4C583.95 601.29 584.56 587.98 587.5 584C590.44 580.02 594.08 579.49 597 580C599.92 580.51 602.32 586.49 604.7 587C607.08 587.51 608.61 582.07 611 583C613.39 583.93 615.35 589.95 618.75 592.5C622.15 595.05 627.56 598.25 631 598C634.44 597.75 635.51 593.92 639 591C642.49 588.08 646.98 581.99 651.5 580.8C656.02 579.61 662.12 581.48 665.6 584C669.09 586.52 669.04 592.44 672 595.6C674.96 598.76 680.37 603.13 683 602.6C685.63 602.07 685.67 596.75 687.5 592.5C689.33 588.25 691.97 580.07 693.75 577.6C695.53 575.13 696.12 576.4 698 578C699.88 579.6 701.11 586.93 704.8 587C708.49 587.07 714.57 577.89 719.7 578.4C724.83 578.91 730.53 587.08 735 590C739.47 592.92 742.26 594.11 746 595.6C749.74 597.09 753.51 599.7 757 598.75C760.49 597.8 762.93 594.12 766.5 590C770.07 585.88 774.51 575.18 778 574.5C781.49 573.82 783.43 580.99 787 586C790.57 591.01 795.6 603.32 799 604C802.4 604.68 803.48 594.25 807 590C810.52 585.75 815.45 580.87 819.7 579C823.95 577.13 829.06 576.96 832 579C834.94 581.04 834.62 585.9 837 591C839.38 596.1 843.11 608.22 846 609C848.89 609.78 851.28 600.7 854 595.6C856.72 590.5 859.33 580.46 862 579C864.67 577.54 867.49 586.15 869.7 587C871.91 587.85 874.1 584.51 875 584L875 590L318.600 590Z" fill="#1f78cc"/><path d="M318.6 588.6C320.2 586.87 323.09 576.55 328 578.4C332.91 580.25 341.26 599.91 347.5 599.5C353.74 599.09 359.69 577.33 364.7 576C369.71 574.67 372.75 590.34 377 591.7C381.25 593.06 383.95 581.6 389.7 584C395.45 586.4 403.95 606.22 410.8 605.8C417.65 605.38 423.68 582.32 430 581.5C436.32 580.68 441.57 601.93 448 601C454.43 600.07 463.38 579.84 467.8 576C472.22 572.16 468.95 574.83 474 578.4C479.05 581.97 492.06 593.92 497.5 597C502.94 600.08 502.92 596.74 506 596.5C509.08 596.26 512.64 597.47 515.6 595.6C518.56 593.73 520.34 588.42 523.4 585.5C526.46 582.58 530.68 578.4 533.6 578.4C536.52 578.4 538.66 584.89 540.6 585.5C542.54 586.11 543.15 581.24 545 582C546.85 582.76 548.52 587.55 551.5 590C554.48 592.45 557.71 594.12 562.5 596.4C567.29 598.68 575.45 605.51 579.7 603.4C583.95 601.29 584.56 587.98 587.5 584C590.44 580.02 594.08 579.49 597 580C599.92 580.51 602.32 586.49 604.7 587C607.08 587.51 608.61 582.07 611 583C613.39 583.93 615.35 589.95 618.75 592.5C622.15 595.05 627.56 598.25 631 598C634.44 597.75 635.51 593.92 639 591C642.49 588.08 646.98 581.99 651.5 580.8C656.02 579.61 662.12 581.48 665.6 584C669.09 586.52 669.04 592.44 672 595.6C674.96 598.76 680.37 603.13 683 602.6C685.63 602.07 685.67 596.75 687.5 592.5C689.33 588.25 691.97 580.07 693.75 577.6C695.53 575.13 696.12 576.4 698 578C699.88 579.6 701.11 586.93 704.8 587C708.49 587.07 714.57 577.89 719.7 578.4C724.83 578.91 730.53 587.08 735 590C739.47 592.92 742.26 594.11 746 595.6C749.74 597.09 753.51 599.7 757 598.75C760.49 597.8 762.93 594.12 766.5 590C770.07 585.88 774.51 575.18 778 574.5C781.49 573.82 783.43 580.99 787 586C790.57 591.01 795.6 603.32 799 604C802.4 604.68 803.48 594.25 807 590C810.52 585.75 815.45 580.87 819.7 579C823.95 577.13 829.06 576.96 832 579C834.94 581.04 834.62 585.9 837 591C839.38 596.1 843.11 608.22 846 609C848.89 609.78 851.28 600.7 854 595.6C856.72 590.5 859.33 580.46 862 579C864.67 577.54 867.49 586.15 869.7 587C871.91 587.85 874.1 584.51 875 584L875 590L318.600 590Z" fill="#25aaa2" clip-path="url(#gclip)"/><path d="M318.6 588.6C320.2 586.87 323.09 576.55 328 578.4C332.91 580.25 341.26 599.91 347.5 599.5C353.74 599.09 359.69 577.33 364.7 576C369.71 574.67 372.75 590.34 377 591.7C381.25 593.06 383.95 581.6 389.7 584C395.45 586.4 403.95 606.22 410.8 605.8C417.65 605.38 423.68 582.32 430 581.5C436.32 580.68 441.57 601.93 448 601C454.43 600.07 463.38 579.84 467.8 576C472.22 572.16 468.95 574.83 474 578.4C479.05 581.97 492.06 593.92 497.5 597C502.94 600.08 502.92 596.74 506 596.5C509.08 596.26 512.64 597.47 515.6 595.6C518.56 593.73 520.34 588.42 523.4 585.5C526.46 582.58 530.68 578.4 533.6 578.4C536.52 578.4 538.66 584.89 540.6 585.5C542.54 586.11 543.15 581.24 545 582C546.85 582.76 548.52 587.55 551.5 590C554.48 592.45 557.71 594.12 562.5 596.4C567.29 598.68 575.45 605.51 579.7 603.4C583.95 601.29 584.56 587.98 587.5 584C590.44 580.02 594.08 579.49 597 580C599.92 580.51 602.32 586.49 604.7 587C607.08 587.51 608.61 582.07 611 583C613.39 583.93 615.35 589.95 618.75 592.5C622.15 595.05 627.56 598.25 631 598C634.44 597.75 635.51 593.92 639 591C642.49 588.08 646.98 581.99 651.5 580.8C656.02 579.61 662.12 581.48 665.6 584C669.09 586.52 669.04 592.44 672 595.6C674.96 598.76 680.37 603.13 683 602.6C685.63 602.07 685.67 596.75 687.5 592.5C689.33 588.25 691.97 580.07 693.75 577.6C695.53 575.13 696.12 576.4 698 578C699.88 579.6 701.11 586.93 704.8 587C708.49 587.07 714.57 577.89 719.7 578.4C724.83 578.91 730.53 587.08 735 590C739.47 592.92 742.26 594.11 746 595.6C749.74 597.09 753.51 599.7 757 598.75C760.49 597.8 762.93 594.12 766.5 590C770.07 585.88 774.51 575.18 778 574.5C781.49 573.82 783.43 580.99 787 586C790.57 591.01 795.6 603.32 799 604C802.4 604.68 803.48 594.25 807 590C810.52 585.75 815.45 580.87 819.7 579C823.95 577.13 829.06 576.96 832 579C834.94 581.04 834.62 585.9 837 591C839.38 596.1 843.11 608.22 846 609C848.89 609.78 851.28 600.7 854 595.6C856.72 590.5 859.33 580.46 862 579C864.67 577.54 867.49 586.15 869.7 587C871.91 587.85 874.1 584.51 875 584" fill="none" stroke="#74d2f6" stroke-width="1.400"/><path d="M306 542.500h13.500v11.700z" fill="#eab22a"/><path d="M890.500 542.500h-13.500v11.700z" fill="#eab22a"/><rect x="465" y="535" width="2.200" height="87.500" fill="#aa343e"/></svg>
<span class="t" style="left:163.3px;top:544.2px;font-size:7px;line-height:9px;color:#f0f0f0;transform:scaleX(0.89);">00:00:00;00</span>
<span class="t" style="left:215.86px;top:544.2px;font-size:7px;line-height:9px;color:#f0f0f0;transform:scaleX(0.89);">00:00:00;20</span>
<span class="t" style="left:268.42px;top:544.2px;font-size:7px;line-height:9px;color:#f0f0f0;transform:scaleX(0.89);">00:00:01;10</span>
<span class="t" style="left:320.98px;top:544.2px;font-size:7px;line-height:9px;color:#f0f0f0;transform:scaleX(0.89);">00:00:02;00</span>
<span class="t" style="left:373.54px;top:544.2px;font-size:7px;line-height:9px;color:#f0f0f0;transform:scaleX(0.89);">00:00:02;20</span>
<span class="t" style="left:426.1px;top:544.2px;font-size:7px;line-height:9px;color:#f0f0f0;transform:scaleX(0.89);">00:00:03;10</span>
<span class="t" style="left:478.66px;top:544.2px;font-size:7px;line-height:9px;color:#f0f0f0;transform:scaleX(0.89);">00:00:04;00</span>
<span class="t" style="left:531.22px;top:544.2px;font-size:7px;line-height:9px;color:#f0f0f0;transform:scaleX(0.89);">00:00:04;20</span>
<span class="t" style="left:583.78px;top:544.2px;font-size:7px;line-height:9px;color:#f0f0f0;transform:scaleX(0.89);">00:00:05;10</span>
<span class="t" style="left:636.34px;top:544.2px;font-size:7px;line-height:9px;color:#f0f0f0;transform:scaleX(0.89);">00:00:06;00</span>
<span class="t" style="left:688.9px;top:544.2px;font-size:7px;line-height:9px;color:#f0f0f0;transform:scaleX(0.89);">00:00:06;20</span>
<span class="t" style="left:741.46px;top:544.2px;font-size:7px;line-height:9px;color:#f0f0f0;transform:scaleX(0.89);">00:00:07;10</span>
<span class="t" style="left:794.02px;top:544.2px;font-size:7px;line-height:9px;color:#f0f0f0;transform:scaleX(0.89);">00:00:08;00</span>
<div class="b" style="left:846.58px;top:543px;width:30.42px;height:9px;overflow:hidden"><span class="t" style="left:0px;top:1.2px;font-size:7px;line-height:9px;color:#f0f0f0;transform:scaleX(0.89);">00:00:08;20</span></div>
<span class="t" style="left:161.5px;top:557.7px;font-size:7px;line-height:9px;color:#f0f0f0;font-weight:bold;transform:scaleX(0.93);">41% Pan Shot Smoothing</span>
<svg class="b" style="left:0;top:624px" width="200" height="16" viewBox="0 624 200 16"><circle cx="161" cy="630.500" r="3.600" fill="none" stroke="#e8e8e8" stroke-width="1.300"/><path d="M163.5 633.500l3 3" stroke="#e8e8e8" stroke-width="1.600"/><path d="M159.2 630.500h3.600" stroke="#e8e8e8" stroke-width="1"/><path d="M161 628.700v3.600" stroke="#e8e8e8" stroke-width="1"/><circle cx="186" cy="630.500" r="3.600" fill="none" stroke="#e8e8e8" stroke-width="1.300"/><path d="M188.5 633.500l3 3" stroke="#e8e8e8" stroke-width="1.600"/><path d="M184.2 630.500h3.600" stroke="#e8e8e8" stroke-width="1"/><circle cx="174.500" cy="631.500" r="3.800" fill="none" stroke="#e8e8e8" stroke-width="1.300"/><path d="M174.500 629v2.500h2" stroke="#e8e8e8" stroke-width="1" fill="none"/></svg>
<div class="b" style="left:858px;top:626px;width:10.5px;height:11px;background:#f0cc28;border-radius:1px"></div>
<span class="t" style="left:860.7px;top:626.55px;font-size:8.5px;line-height:10.5px;color:#c9a81e;font-weight:bold;transform:scaleX(0.88);">P</span>
<span class="t" style="left:872.9px;top:626.55px;font-size:8.5px;line-height:10.5px;color:#ececec;font-weight:bold;transform:scaleX(0.85);">R</span>
<span class="t" style="left:884.9px;top:626.55px;font-size:8.5px;line-height:10.5px;color:#ececec;font-weight:bold;transform:scaleX(0.85);">C</span>
<span class="t" style="left:896.9px;top:626.55px;font-size:8.5px;line-height:10.5px;color:#ececec;font-weight:bold;">Z</span>
<span class="t" style="left:908.9px;top:626.55px;font-size:8.5px;line-height:10.5px;color:#ececec;font-weight:bold;">T</span>
<span class="t" style="left:919.9px;top:626.55px;font-size:8.5px;line-height:10.5px;color:#ececec;font-weight:bold;transform:scaleX(0.92);">S</span>
<div class="b" style="left:153px;top:644px;width:778px;height:100px;background:#1e1e1e;"></div>
<div class="b" style="left:156px;top:645px;width:47.5px;height:15.5px;background:#3c3c3c;"></div>
<span class="t" style="left:160px;top:647.95px;font-size:8.5px;line-height:10.5px;color:#fff;font-weight:bold;transform:scaleX(0.97);">Media Bin</span>
<div class="b" style="left:156px;top:660.5px;width:772px;height:1px;background:#303030;"></div>
<div class="b" style="left:154.5px;top:661px;width:1px;height:83px;background:#2c2c2c;"></div>
<svg class="b" style="left:915px;top:648px;" width="9" height="9" viewBox="0 0 9 9"><rect x="1.200" y="1.200" width="6" height="5.500" fill="#1c1c1c" stroke="#e8e8e8" stroke-width="1.300"/><rect x="1.200" y="1.200" width="6" height="2" fill="#e8e8e8"/></svg>
<svg class="b" style="left:167.8px;top:662.1px;" width="117.2" height="65.6" viewBox="0 0 117.2 65.6"><defs><clipPath id="th1"><rect x="0" y="0" width="117.200" height="65.600"/></clipPath><filter color-interpolation-filters="sRGB" id="bl" x="-10%" y="-10%" width="120%" height="120%"><feGaussianBlur color-interpolation-filters="sRGB" stdDeviation="1.300"/></filter><linearGradient id="dash" x1="0" y1="0" x2="0" y2="1"><stop offset="0" stop-color="#5d6b78"/><stop offset="0.300" stop-color="#2f3b48"/><stop offset="1" stop-color="#1b222b"/></linearGradient><linearGradient id="topb" x1="0" y1="0" x2="1" y2="0"><stop offset="0" stop-color="#8b949b"/><stop offset="0.300" stop-color="#c3cbd1"/><stop offset="0.700" stop-color="#b4c2cd"/><stop offset="1" stop-color="#8799a8"/></linearGradient></defs><g clip-path="url(#th1)"><g filter="url(#bl)"><rect x="-4" y="-4" width="126" height="74" fill="#f8f9fa"/><rect x="-4" y="-4" width="126" height="11.500" fill="url(#topb)"/><path d="M54 -2h6l-0.500 29h-4.500z" fill="#737d86"/><path d="M-4 32c18-6 44-7 62-6.500c22 0.500 46 1.500 64 4v42h-126z" fill="url(#dash)"/><path d="M91 41l13-5 3.500 8-3.500 16-12 2.500z" fill="#8c7b66"/><path d="M108 37l11-2v13l-8 1z" fill="#c9cdd1"/><path d="M70 43h5.500v9h-5.500z" fill="#7d6b2e"/><path d="M49 58h14v10h-14z" fill="#566069"/><path d="M-4 49c5-3.500 13-4 18-1.500l11 22h-29z" fill="#8cc0e6"/><path d="M4 47.500l9-2 2 4-9 2.500z" fill="#f4f6f8"/><path d="M100 70l6-17c4-3.500 9-4.500 16-4v21z" fill="#e0e9f2"/></g></g></svg>
<span class="t" style="left:188px;top:729.75px;font-size:7.5px;line-height:9.5px;color:#fff;font-weight:bold;transform:scaleX(0.96);">VID_20180514_112012</span>
<div class="b" style="left:306px;top:661px;width:121.5px;height:67px;background:#ead93c;"></div>
<div class="b" style="left:309.5px;top:664px;width:114.5px;height:61px;background:#9dd5f7;"></div>
<svg class="b" style="left:330px;top:686px;" width="36" height="13.3" viewBox="-1 -3 38 14"><path d="M1 6.500c1-3 4-4.500 8-4.500l0.500-1.500h4l1 1.500 17 1 3-5.500h1.500l-1 8.500-8-0.500-14 1.500c-5 1-11 1.500-13-0.500z" fill="#141c26"/><path d="M0 0.500h22" stroke="#5a7088" stroke-width="0.700"/><path d="M4 10.500h11" stroke="#2a3644" stroke-width="0.900"/></svg>
<span class="t" style="left:350px;top:729.75px;font-size:7.5px;line-height:9.5px;color:#fff;font-weight:bold;transform:scaleX(0.96);">MVI_0749</span>
<div class="b" style="left:931px;top:90px;width:349px;height:654px;background:#1e1e1e;"></div>
<div class="b" style="left:1272.5px;top:90px;width:1px;height:654px;background:#2c2c2c;"></div>
<div class="b" style="left:933px;top:91px;width:48.5px;height:15.5px;background:#3c3c3c;"></div>
<span class="t" style="left:937px;top:93.95px;font-size:8.5px;line-height:10.5px;color:#fff;font-weight:bold;transform:scaleX(0.93);">Histogram</span>
<div class="b" style="left:932px;top:105.5px;width:340px;height:1px;background:#3c3c3c;"></div>
<svg class="b" style="left:1258px;top:93px;" width="9" height="9" viewBox="0 0 9 9"><rect x="1.200" y="1.200" width="6" height="5.500" fill="#1c1c1c" stroke="#e8e8e8" stroke-width="1.300"/><rect x="1.200" y="1.200" width="6" height="2" fill="#e8e8e8"/></svg>
<svg class="b" style="left:0;top:106px" width="1280" height="64" viewBox="0 106 1280 64"><rect x="932" y="106" width="340.500" height="63" fill="#000"/><rect x="932" y="131" width="11.200" height="37.800" fill="#f6f6f6"/><rect x="943.900" y="106" width="1.400" height="62" fill="#5a50d8"/><path d="M944 167.500h328" stroke="#f0f0f0" stroke-width="1.200"/><path d="M957 168l4-2h8l3 2z" fill="#e87a8a" opacity="0.800"/><path d="M1055 168l2-6 3-12 2.500-28 1.500-16h17l1.500 15 2 22 2.500 20 1.500 5z" fill="#f57f8c"/><path d="M1101 168l3.500-8 1.500-1 3.500 9z" fill="#fff"/><path d="M1118 168l3-7 5-14 7-22 4-12 2-6h14.500l2 10 2 22 2.500 18 3 11z" fill="#82f08a"/><path d="M1192 168l4-8 6-14 5-15 5-16 2.500-4 3 7 2.500-1 2.500-10h16l1.500 12 1.500 24 2 18 3 5 5 2z" fill="#7a78f0"/></svg>
<span class="t" style="left:933px;top:121.75px;font-size:7.5px;line-height:9.5px;color:#fff;font-weight:bold;transform:scaleX(1.08);">60</span>
<div class="b" style="left:983px;top:175px;width:56.5px;height:16px;background:#3c3c3c;"></div>
<span class="t" style="left:937px;top:178.5px;font-size:8px;line-height:10px;color:#9c9c9c;transform:scaleX(1.02);">Information</span>
<span class="t" style="left:987px;top:178.5px;font-size:8px;line-height:10px;color:#fff;font-weight:bold;">Stabilization</span>
<span class="t" style="left:1043px;top:178.5px;font-size:8px;line-height:10px;color:#9c9c9c;">Effects</span>
<span class="t" style="left:1075px;top:178.5px;font-size:8px;line-height:10px;color:#9c9c9c;transform:scaleX(0.97);">Source Media</span>
<span class="t" style="left:1132px;top:178.5px;font-size:8px;line-height:10px;color:#9c9c9c;">Target Media</span>
<svg class="b" style="left:1248px;top:177px;" width="21" height="9" viewBox="0 0 21 9"><rect x="1.200" y="1.200" width="6" height="5.500" fill="#1c1c1c" stroke="#e8e8e8" stroke-width="1.300"/><rect x="1.200" y="1.200" width="6" height="2" fill="#e8e8e8"/><path d="M12.500 1h7v1.600h-7zM12.500 4h7l-3.500 3.500z" fill="#e8e8e8"/></svg>
<div class="b" style="left:934px;top:193.2px;width:337.5px;height:505.6px;background:#161618;"></div>
<div class="b" style="left:934px;top:193.2px;width:337.5px;height:19.5px;background:linear-gradient(#33729f,#2c6893);"></div>
<span class="t" style="left:950px;top:196.65px;font-size:11px;line-height:13px;color:#fff;transform:scaleX(0.97);">Smoothing</span>
<div class="b" style="left:934.3px;top:215.6px;width:337.2px;height:49.2px;background:#263747;border-radius:1.500px;box-shadow:inset 0 0 0 1px rgba(0,0,0,0.180)"></div>
<span class="t" style="left:941px;top:224.25px;font-size:8.5px;line-height:10.5px;color:#fff;transform:scaleX(0.92);">Pan Shot Smoothing</span>
<div class="b" style="left:934.3px;top:267.6px;width:337.2px;height:43.7px;background:#263747;border-radius:1.500px;box-shadow:inset 0 0 0 1px rgba(0,0,0,0.180)"></div>
<div class="b" style="left:938px;top:272px;width:17px;height:9.5px;background:#f0d428;border-radius:4.75px;box-shadow:0 0 0 1px #1c1c1c"><div class="b" style="right:1.500px;top:1.500px;width:6.5px;height:6.5px;border-radius:50%;background:#6b5636"></div></div>
<span class="t" style="left:959px;top:272.25px;font-size:8.5px;line-height:10.5px;color:#fff;transform:scaleX(0.95);">Z-Axis Smoothing</span>
<div class="b" style="left:934px;top:314.8px;width:337.5px;height:19.6px;background:linear-gradient(#6033a4,#582c98);"></div>
<span class="t" style="left:950px;top:318.3px;font-size:11px;line-height:13px;color:#fff;transform:scaleX(0.97);">Border</span>
<div class="b" style="left:934.3px;top:337.8px;width:337.2px;height:23.8px;background:#2a2245;border-radius:1.500px;box-shadow:inset 0 0 0 1px rgba(0,0,0,0.180)"></div>
<div class="b" style="left:937px;top:340px;width:331.5px;height:15.5px;background:#28203f;border-radius:1.500px;box-shadow:0 0 0 1px rgba(0,0,0,0.350)"></div>
<span class="t" style="left:1077px;top:343.5px;font-size:8px;line-height:10px;color:#fff;transform:scaleX(0.95);">Best Border</span>
<div class="b" style="left:934.3px;top:363.6px;width:337.2px;height:48.5px;background:#2a2245;border-radius:1.500px;box-shadow:inset 0 0 0 1px rgba(0,0,0,0.180)"></div>
<span class="t" style="left:941px;top:370.75px;font-size:8.5px;line-height:10.5px;color:#fff;transform:scaleX(0.85);">Scale</span>
<div class="b" style="left:934.3px;top:414.3px;width:337.2px;height:23.5px;background:#2a2245;border-radius:1.500px;box-shadow:inset 0 0 0 1px rgba(0,0,0,0.180)"></div>
<span class="t" style="left:1086px;top:420.5px;font-size:8px;line-height:10px;color:#8e8aa0;transform:scaleX(0.96);">Reflect</span>
<div class="b" style="left:934px;top:442px;width:337.5px;height:19.5px;background:linear-gradient(#a2315c,#982b54);"></div>
<span class="t" style="left:950px;top:445.45px;font-size:11px;line-height:13px;color:#fff;transform:scaleX(0.97);">Dynamics</span>
<div class="b" style="left:934.3px;top:464.3px;width:337.2px;height:22.2px;background:#492034;border-radius:1.500px;box-shadow:inset 0 0 0 1px rgba(0,0,0,0.180)"></div>
<div class="b" style="left:938px;top:469.5px;width:17px;height:9.5px;background:#f0d428;border-radius:4.75px;box-shadow:0 0 0 1px #1c1c1c"><div class="b" style="right:1.500px;top:1.500px;width:6.5px;height:6.5px;border-radius:50%;background:#6b5636"></div></div>
<span class="t" style="left:959px;top:469.75px;font-size:8.5px;line-height:10.5px;color:#fff;transform:scaleX(0.89);">Keep Camera Dynamic</span>
<div class="b" style="left:934.3px;top:489.2px;width:337.2px;height:48.6px;background:#492034;border-radius:1.500px;box-shadow:inset 0 0 0 1px rgba(0,0,0,0.180)"></div>
<span class="t" style="left:941px;top:497.25px;font-size:8.5px;line-height:10.5px;color:#fff;transform:scaleX(0.9);">Dynamic Scale</span>
<div class="b" style="left:934px;top:542px;width:337.5px;height:20px;background:linear-gradient(#917030,#88682a);"></div>
<span class="t" style="left:950px;top:545.7px;font-size:11px;line-height:13px;color:#fff;transform:scaleX(0.96);">Extras</span>
<div class="b" style="left:934.3px;top:565px;width:337.2px;height:42.7px;background:#3c3423;border-radius:1.500px;box-shadow:inset 0 0 0 1px rgba(0,0,0,0.180)"></div>
<div class="b" style="left:939px;top:570.7px;width:15.5px;height:7.5px;background:#1c1c22;border-radius:3.75px;box-shadow:0 0 0 0.500px #15151a"><div class="b" style="left:0.800px;top:0.800px;width:5.9px;height:5.9px;border-radius:50%;background:#f4f4f4"></div></div>
<span class="t" style="left:959px;top:569.75px;font-size:8.5px;line-height:10.5px;color:#fff;transform:scaleX(0.96);">Zoom Smoothing</span>
<div class="b" style="left:934.3px;top:610.7px;width:337.2px;height:43.1px;background:#3c3423;border-radius:1.500px;box-shadow:inset 0 0 0 1px rgba(0,0,0,0.180)"></div>
<div class="b" style="left:939px;top:616.2px;width:15.5px;height:7.5px;background:#1c1c22;border-radius:3.75px;box-shadow:0 0 0 0.500px #15151a"><div class="b" style="left:0.800px;top:0.800px;width:5.9px;height:5.9px;border-radius:50%;background:#f4f4f4"></div></div>
<span class="t" style="left:959px;top:615.25px;font-size:8.5px;line-height:10.5px;color:#fff;transform:scaleX(0.95);">X-Axis Smoothing</span>
<div class="b" style="left:934.3px;top:656.5px;width:337.2px;height:42.3px;background:#3c3423;border-radius:1.500px;box-shadow:inset 0 0 0 1px rgba(0,0,0,0.180)"></div>
<div class="b" style="left:939px;top:661.7px;width:15.5px;height:7.5px;background:#1c1c22;border-radius:3.75px;box-shadow:0 0 0 0.500px #15151a"><div class="b" style="left:0.800px;top:0.800px;width:5.9px;height:5.9px;border-radius:50%;background:#f4f4f4"></div></div>
<span class="t" style="left:959px;top:660.75px;font-size:8.5px;line-height:10.5px;color:#fff;transform:scaleX(0.96);">Y-Axis Smoothing</span>
<svg class="b" style="left:0;top:190px" width="1280" height="520" viewBox="0 190 1280 520"><defs><linearGradient id="thg" x1="0" y1="0" x2="0" y2="1"><stop offset="0" stop-color="#8e8e8e"/><stop offset="0.450" stop-color="#b0b0b0"/><stop offset="1" stop-color="#7c7c7c"/></linearGradient></defs><path d="M939.500 202.15l2.500-2.500 2.500 2.500M939.500 205.65l2.500-2.500 2.500 2.500" fill="none" stroke="#fff" stroke-width="1.100"/><path d="M950.5 245.5v3.500M976.55 245.5v3.500M1002.6 245.5v3.500M1028.65 245.5v3.500M1054.7 245.5v3.500M1080.75 245.5v3.500M1106.8 245.5v3.500M1132.85 245.5v3.500M1158.9 245.5v3.500M1184.95 245.5v3.500M1211 245.5v3.500" stroke="#b8b8b8" stroke-width="1.200"/><rect x="939" y="253.3" width="283" height="2.400" rx="1.200" fill="#b2b2b2"/><rect x="1043" y="250.5" width="23" height="8" rx="1.500" fill="url(#thg)" stroke="#33383c" stroke-width="0.900"/><rect x="1045" y="253.9" width="19" height="2.400" fill="#8a8a8a" opacity="0.700"/><rect x="1229.500" y="244" width="38.500" height="15" rx="1.500" fill="#213140" stroke="#000" stroke-opacity="0.350" stroke-width="1"/><path d="M1260.500 249.5l2-2.200 2 2.200zM1260.500 252.4l2 2.200 2-2.200z" fill="#fff"/><path d="M950.5 291.5v3.500M976.55 291.5v3.500M1002.6 291.5v3.500M1028.65 291.5v3.500M1054.7 291.5v3.500M1080.75 291.5v3.500M1106.8 291.5v3.500M1132.85 291.5v3.500M1158.9 291.5v3.500M1184.95 291.5v3.500M1211 291.5v3.500" stroke="#b8b8b8" stroke-width="1.200"/><rect x="939" y="299.3" width="283" height="2.400" rx="1.200" fill="#b2b2b2"/><rect x="1053" y="296.5" width="23" height="8" rx="1.500" fill="url(#thg)" stroke="#33383c" stroke-width="0.900"/><rect x="1055" y="299.9" width="19" height="2.400" fill="#8a8a8a" opacity="0.700"/><rect x="1229.500" y="290" width="38.500" height="15" rx="1.500" fill="#213140" stroke="#000" stroke-opacity="0.350" stroke-width="1"/><path d="M1260.500 295.5l2-2.200 2 2.200zM1260.500 298.4l2 2.200 2-2.200z" fill="#fff"/><path d="M939.500 323.8l2.500-2.500 2.500 2.500M939.500 327.3l2.500-2.500 2.500 2.500" fill="none" stroke="#fff" stroke-width="1.100"/><path d="M988 325.500h110" stroke="#8d6cc4" stroke-width="1" stroke-dasharray="1 1.500" opacity="0.600"/><path d="M1260.800 347l2.200 2.400 2.200-2.400z" fill="#fff"/><path d="M950.5 392.5v3.500M976.55 392.5v3.500M1002.6 392.5v3.500M1028.65 392.5v3.500M1054.7 392.5v3.500M1080.75 392.5v3.500M1106.8 392.5v3.500M1132.85 392.5v3.500M1158.9 392.5v3.500M1184.95 392.5v3.500M1211 392.5v3.500" stroke="#b8b8b8" stroke-width="1.200"/><rect x="939" y="400.3" width="283" height="2.400" rx="1.200" fill="#b2b2b2"/><rect x="1068.5" y="397.5" width="23" height="8" rx="1.500" fill="url(#thg)" stroke="#33383c" stroke-width="0.900"/><rect x="1070.5" y="400.9" width="19" height="2.400" fill="#8a8a8a" opacity="0.700"/><rect x="1229.500" y="391" width="38.500" height="15" rx="1.500" fill="#221b39" stroke="#000" stroke-opacity="0.350" stroke-width="1"/><path d="M1260.500 396.5l2-2.200 2 2.200zM1260.500 399.4l2 2.200 2-2.200z" fill="#fff"/><path d="M1260.800 424l2.200 2.400 2.200-2.400z" fill="#fff"/><path d="M939.500 450.95l2.500-2.500 2.500 2.500M939.500 454.45l2.500-2.500 2.500 2.500" fill="none" stroke="#fff" stroke-width="1.100"/><path d="M950.5 518.5v3.500M976.55 518.5v3.500M1002.6 518.5v3.500M1028.65 518.5v3.500M1054.7 518.5v3.500M1080.75 518.5v3.500M1106.8 518.5v3.500M1132.85 518.5v3.500M1158.9 518.5v3.500M1184.95 518.5v3.500M1211 518.5v3.500" stroke="#b8b8b8" stroke-width="1.200"/><rect x="939" y="526.3" width="283" height="2.400" rx="1.200" fill="#b2b2b2"/><rect x="1134" y="523.5" width="23" height="8" rx="1.500" fill="url(#thg)" stroke="#33383c" stroke-width="0.900"/><rect x="1136" y="526.9" width="19" height="2.400" fill="#8a8a8a" opacity="0.700"/><rect x="1229.500" y="517" width="38.500" height="15" rx="1.500" fill="#3d1a2c" stroke="#000" stroke-opacity="0.350" stroke-width="1"/><path d="M1260.500 522.5l2-2.200 2 2.200zM1260.500 525.4l2 2.200 2-2.200z" fill="#fff"/><path d="M939.500 551.2l2.500-2.500 2.500 2.500M939.500 554.7l2.500-2.500 2.500 2.500" fill="none" stroke="#fff" stroke-width="1.100"/><path d="M950.5 589.5v3.500M976.55 589.5v3.500M1002.6 589.5v3.500M1028.65 589.5v3.500M1054.7 589.5v3.500M1080.75 589.5v3.500M1106.8 589.5v3.500M1132.85 589.5v3.500M1158.9 589.5v3.500M1184.95 589.5v3.500M1211 589.5v3.500" stroke="#aaa08a" stroke-width="1.200"/><rect x="939" y="597.3" width="283" height="2.400" rx="1.200" fill="#a09a8c"/><path d="M1260.500 593.5l2-2.200 2 2.200zM1260.500 596.4l2 2.200 2-2.200z" fill="#8e8878"/><path d="M950.5 634.5v3.500M976.55 634.5v3.500M1002.6 634.5v3.500M1028.65 634.5v3.500M1054.7 634.5v3.500M1080.75 634.5v3.500M1106.8 634.5v3.500M1132.85 634.5v3.500M1158.9 634.5v3.500M1184.95 634.5v3.500M1211 634.5v3.500" stroke="#aaa08a" stroke-width="1.200"/><rect x="939" y="642.3" width="283" height="2.400" rx="1.200" fill="#a09a8c"/><path d="M1260.500 638.5l2-2.200 2 2.200zM1260.500 641.4l2 2.200 2-2.200z" fill="#8e8878"/><path d="M950.5 680v3.500M976.55 680v3.500M1002.6 680v3.500M1028.65 680v3.500M1054.7 680v3.500M1080.75 680v3.500M1106.8 680v3.500M1132.85 680v3.500M1158.9 680v3.500M1184.95 680v3.500M1211 680v3.500" stroke="#aaa08a" stroke-width="1.200"/><rect x="939" y="687.8" width="283" height="2.400" rx="1.200" fill="#a09a8c"/><path d="M1260.500 684l2-2.200 2 2.200zM1260.500 686.9l2 2.200 2-2.200z" fill="#8e8878"/></svg>
<span class="t" style="left:1247.5px;top:245.45px;font-size:8.5px;line-height:10.5px;color:#fff;transform:scaleX(0.95);">40</span>
<span class="t" style="left:1247.5px;top:291.45px;font-size:8.5px;line-height:10.5px;color:#fff;transform:scaleX(0.95);">44</span>
<span class="t" style="left:1247.5px;top:392.45px;font-size:8.5px;line-height:10.5px;color:#fff;transform:scaleX(0.95);">50</span>
<span class="t" style="left:1247.5px;top:518.45px;font-size:8.5px;line-height:10.5px;color:#fff;transform:scaleX(0.95);">75</span>
<span class="t" style="left:1247.5px;top:589.45px;font-size:8.5px;line-height:10.5px;color:#8e8878;transform:scaleX(0.95);">50</span>
<span class="t" style="left:1247.5px;top:634.45px;font-size:8.5px;line-height:10.5px;color:#8e8878;transform:scaleX(0.95);">55</span>
<span class="t" style="left:1247.5px;top:679.95px;font-size:8.5px;line-height:10.5px;color:#8e8878;transform:scaleX(0.95);">55</span>
<div class="b" style="left:0px;top:744px;width:1280px;height:26px;background:#a4a4a4;border-left:1px solid #333"></div>
<div class="b" style="left:0px;top:770px;width:1280px;height:2px;background:#202020;"></div>
<div class="b" style="left:0px;top:772px;width:1280px;height:14px;background:#000;"></div>
<span class="t" style="left:9px;top:756.25px;font-size:8.5px;line-height:10.5px;color:#fff;transform:scaleX(0.87);">Video: 1920x1080 : 1,000</span>
<span class="t" style="left:103px;top:756.25px;font-size:8.5px;line-height:10.5px;color:#fff;transform:scaleX(0.89);">Progressive</span>
<span class="t" style="left:153px;top:756.25px;font-size:8.5px;line-height:10.5px;color:#fff;transform:scaleX(0.84);">9,676 Sec.</span>
<span class="t" style="left:197px;top:756.25px;font-size:8.5px;line-height:10.5px;color:#fff;transform:scaleX(0.86);">Range: 00:00:02;00 to 00:00:09;01 : 7,074 Sec.</span>
<svg class="b" style="left:1150px;top:751px;" width="125" height="16" viewBox="0 0 125 16"><text x="1.500" y="12.500" font-size="7.500" font-weight="bold" fill="#fff" font-family="Liberation Sans,sans-serif">xs</text><circle cx="28.300" cy="8.500" r="4.300" fill="#fff"/><path d="M33 8.500h33" stroke="#e2e2e2" stroke-width="1.800"/><path d="M66 4.500h5.500v5l-2.750 3-2.750-3z" fill="#fff"/><rect x="104.500" y="4.500" width="7" height="8.500" rx="1" fill="#fff"/><path d="M116.500 6v1.200M116.500 9v1.200M116.500 12v1.200M119.500 9v1.200M119.500 12v1.200" stroke="#e8e8e8" stroke-width="1.200"/></svg>
<span class="t" style="left:1116.300px;top:742.700px;font-size:20.500px;line-height:26px;color:#5c5c5c;opacity:0.820;transform:scaleX(0.97)">Color<span style="color:#f08a3c">Mango</span>.com</span>
</body>
</html>
